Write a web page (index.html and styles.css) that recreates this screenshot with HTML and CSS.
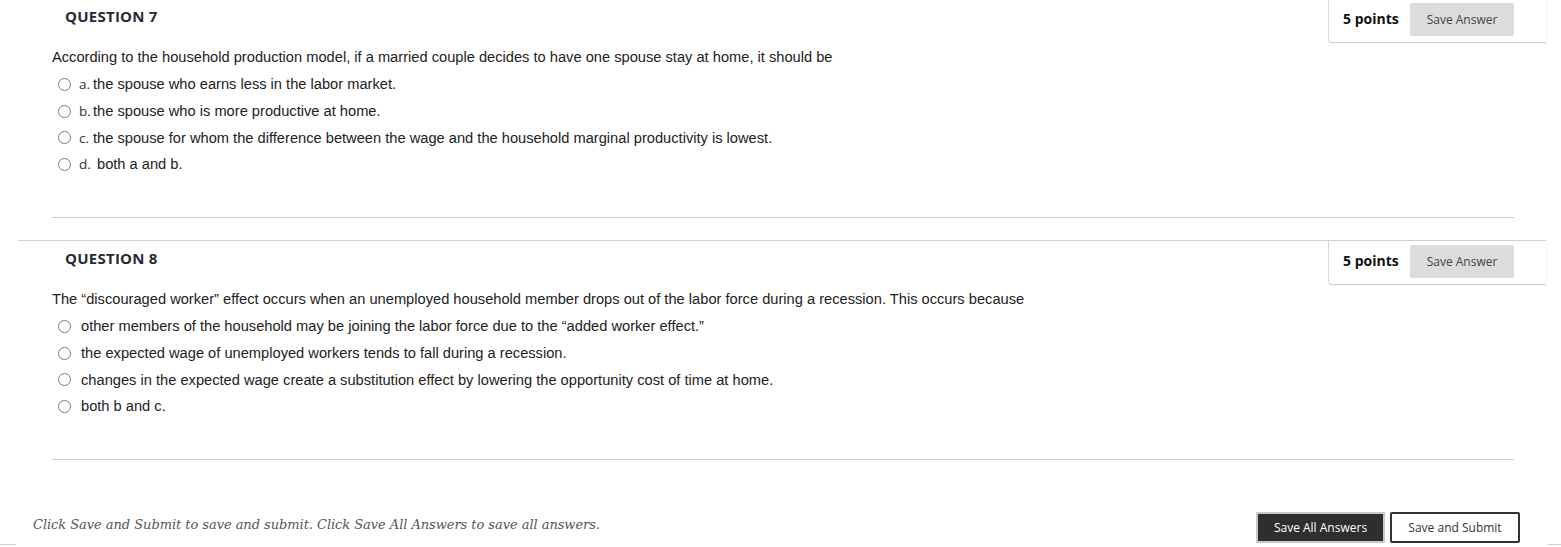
FILE: index.html
```html
<!DOCTYPE html>
<html lang="en">
<head>
<meta charset="utf-8">
<title>Quiz</title>
<link rel="stylesheet" href="styles.css">
</head>
<body>
<div class="page">
  <section class="question">
    <div class="q-head">
      <h3 class="q-title">QUESTION 7</h3>
      <div class="points-box">
        <span class="points">5 points</span>
        <button class="save-answer">Save Answer</button>
      </div>
    </div>
    <div class="q-body">
      <p class="q-text">According to the household production model, if a married couple decides to have one spouse stay at home, it should be</p>
      <ul class="options">
        <li class="opt"><span class="radio"></span><span class="letter">a.</span><span class="ans">the spouse who earns less in the labor market.</span></li>
        <li class="opt"><span class="radio"></span><span class="letter">b.</span><span class="ans">the spouse who is more productive at home.</span></li>
        <li class="opt"><span class="radio"></span><span class="letter">c.</span><span class="ans">the spouse for whom the difference between the wage and the household marginal productivity is lowest.</span></li>
        <li class="opt"><span class="radio"></span><span class="letter wide">d.</span><span class="ans">both a and b.</span></li>
      </ul>
      <div class="sep"></div>
    </div>
  </section>
  <section class="question">
    <div class="q-head">
      <h3 class="q-title">QUESTION 8</h3>
      <div class="points-box">
        <span class="points">5 points</span>
        <button class="save-answer">Save Answer</button>
      </div>
    </div>
    <div class="q-body">
      <p class="q-text">The “discouraged worker” effect occurs when an unemployed household member drops out of the labor force during a recession. This occurs because</p>
      <ul class="options plain">
        <li class="opt"><span class="radio"></span><span class="ans">other members of the household may be joining the labor force due to the “added worker effect.”</span></li>
        <li class="opt"><span class="radio"></span><span class="ans">the expected wage of unemployed workers tends to fall during a recession.</span></li>
        <li class="opt"><span class="radio"></span><span class="ans">changes in the expected wage create a substitution effect by lowering the opportunity cost of time at home.</span></li>
        <li class="opt"><span class="radio"></span><span class="ans">both b and c.</span></li>
      </ul>
      <div class="sep"></div>
    </div>
  </section>
  <footer class="submit-bar">
    <p class="hint">Click Save and Submit to save and submit. Click Save All Answers to save all answers.</p>
    <div class="actions">
      <button class="btn-dark">Save All Answers</button>
      <button class="btn-light">Save and Submit</button>
    </div>
  </footer>
  <div class="edge"><span class="edge-l"></span><span class="edge-r"></span></div>
</div>
</body>
</html>
```

FILE: styles.css
```css
* { box-sizing: border-box; }
html, body { margin: 0; padding: 0; background: #fff; }
body { font-family: "Liberation Sans", Arial, sans-serif; color: #222; overflow: hidden; }
.page { margin-top: -2px; }

.question {
  margin: 0 15px 0 18px;
  border-top: 1px solid #cfcfcf;
  height: 242px;
}
.q-head {
  display: flex;
  justify-content: space-between;
  align-items: flex-start;
  height: 44px;
}
.q-title {
  margin: 0;
  padding: 8px 0 0 47px;
  font-family: "Open Sans", sans-serif;
  font-weight: 700;
  font-size: 15px;
  line-height: 18px;
  color: #262b33;
  letter-spacing: 0.25px;
}
.points-box {
  display: flex;
  align-items: center;
  width: 218px;
  height: 44px;
  padding: 4px 32px 6px 14px;
  border-left: 1px solid #d8d8d8;
  border-bottom: 1px solid #cfcfcf;
  border-bottom-left-radius: 4px;
  box-shadow: 1px 1px 2px rgba(0,0,0,0.04);
  justify-content: space-between;
}
.points {
  font-family: "Open Sans", sans-serif;
  font-weight: 700;
  font-size: 14px;
  color: #111;
  margin-top: -2px;
}
.save-answer {
  width: 104px;
  height: 33px;
  border: 0;
  border-radius: 2px;
  background: #dcdcdc;
  color: #444;
  font-family: "Open Sans", sans-serif;
  font-size: 12px;
  padding: 0;
}

.q-body { padding: 0 32px 0 34px; }
.q-text {
  margin: 5px 0 0;
  font-size: 14.67px;
  line-height: 18px;
  color: #222;
}
.options {
  list-style: none;
  margin: 5px 0 0;
  padding: 0 0 0 6px;
}
.opt {
  display: flex;
  align-items: center;
  height: 26.7px;
  font-size: 14.67px;
}
.radio {
  width: 13px;
  height: 13px;
  border: 1px solid #7a7a7a;
  border-radius: 50%;
  flex: none;
  margin-right: 8px;
}
.letter {
  font-family: "Open Sans", sans-serif;
  font-size: 13.5px;
  color: #333;
  width: 14px;
  flex: none;
}
.letter.wide { width: 18px; }
.plain .radio { margin-right: 10px; }
.ans { color: #222; }
.sep {
  margin-top: 39px;
  height: 1px;
  background: #cfcfcf;
}

.submit-bar {
  display: flex;
  justify-content: space-between;
  align-items: center;
  margin-top: 30px;
  padding: 0 41px 0 33px;
  height: 31px;
}
.hint {
  margin: 0 0 6px;
  font-family: "DejaVu Serif", Georgia, serif;
  font-style: italic;
  font-size: 13px;
  letter-spacing: -0.05px;
  color: #555;
}
.actions { display: flex; gap: 5px; }
.btn-dark, .btn-light {
  height: 31px;
  width: 130px;
  font-family: "Open Sans", sans-serif;
  font-size: 12px;
  padding: 0;
  border-radius: 0;
}
.btn-dark {
  width: 129px;
  background: #2e2e2e;
  color: #fff;
  border: 2px solid #c8c8c8;
}
.btn-light {
  background: #fff;
  color: #333;
  border: 2px solid #333;
  border-radius: 2px;
}
.edge {
  display: flex;
  justify-content: space-between;
  margin-top: 1px;
}
.edge-l { width: 16px; height: 1px; background: #d0d0d0; }
.edge-r { width: 13px; height: 1px; background: #d0d0d0; }
```
